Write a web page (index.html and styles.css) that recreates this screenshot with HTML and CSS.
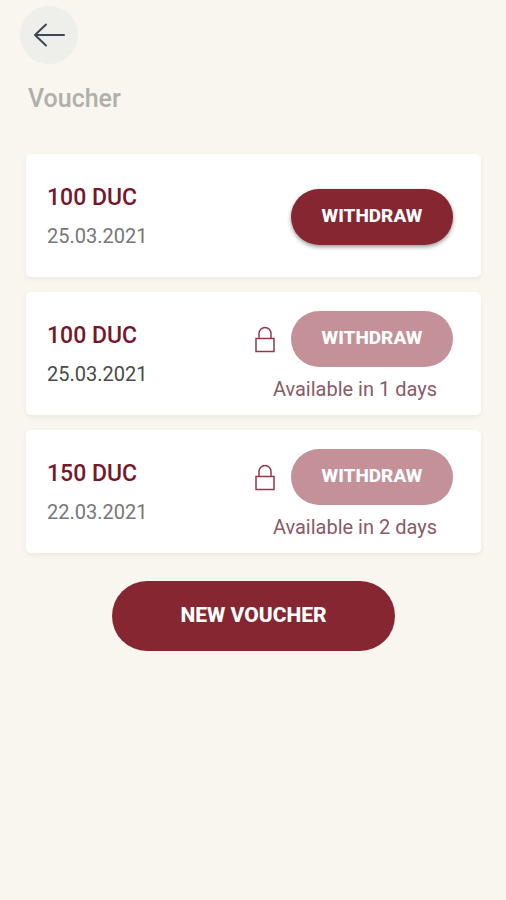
FILE: index.html
```html
<!DOCTYPE html>
<html lang="en">

<head>
    <meta charset="utf-8">
    <meta name="viewport" content="width=device-width, initial-scale=1">
    <title>Voucher</title>
    <link rel="stylesheet" href="styles.css">
</head>

<body>
    <header class="header">
        <button type="button" class="back" aria-label="Back">
            <svg width="32" height="24" viewBox="0 0 32 24">
                <path d="M31 12H2M13 1.5L2 12l11 10.5" />
            </svg>
        </button>
        <h1 class="title">Voucher</h1>
    </header>

    <main class="content">
        <ul class="list">
            <li class="card">
                <div class="info">
                    <h2 class="amount">100 DUC</h2>
                    <p class="date light">25.03.2021</p>
                </div>
                <div class="action">
                    <button type="button" class="btn withdraw">WITHDRAW</button>
                </div>
            </li>
            <li class="card">
                <div class="info">
                    <h2 class="amount">100 DUC</h2>
                    <p class="date">25.03.2021</p>
                </div>
                <div class="action">
                    <div class="locked">
                        <svg class="lock" width="20" height="28" viewBox="0 0 20 28">
                            <path d="M1 13.5h18v13H1zM4 13.5v-5a6 6 0 0 1 12 0v5" />
                        </svg>
                        <button type="button" class="btn withdraw" disabled>WITHDRAW</button>
                    </div>
                    <p class="note">Available in 1 days</p>
                </div>
            </li>
            <li class="card">
                <div class="info">
                    <h2 class="amount">150 DUC</h2>
                    <p class="date light">22.03.2021</p>
                </div>
                <div class="action">
                    <div class="locked">
                        <svg class="lock" width="20" height="28" viewBox="0 0 20 28">
                            <path d="M1 13.5h18v13H1zM4 13.5v-5a6 6 0 0 1 12 0v5" />
                        </svg>
                        <button type="button" class="btn withdraw" disabled>WITHDRAW</button>
                    </div>
                    <p class="note">Available in 2 days</p>
                </div>
            </li>
        </ul>

        <button type="button" class="btn new-voucher">NEW VOUCHER</button>
    </main>
</body>

</html>
```
FILE: styles.css
```css
* {
    box-sizing: border-box;
}

body {
    margin: 0;
    background: #f9f6f0;
    font-family: Roboto, sans-serif;
}

h1,
h2,
p,
ul {
    margin: 0;
    padding: 0;
}

.header {
    padding: 6px 20px 0;
}

.back {
    display: flex;
    align-items: center;
    justify-content: center;
    width: 58px;
    height: 58px;
    padding: 0;
    border: none;
    border-radius: 50%;
    background: #eeeeea;
    cursor: pointer;
}

.back svg {
    fill: none;
    stroke: #3c4856;
    stroke-width: 2;
    stroke-linecap: round;
    stroke-linejoin: round;
}

.title {
    margin: 20px 8px 0;
    color: #b0afab;
    font-size: 25px;
    font-weight: 500;
    line-height: 30px;
}

.content {
    display: flex;
    flex-direction: column;
    align-items: center;
    padding: 40px 25px 40px 26px;
}

.list {
    display: flex;
    flex-direction: column;
    gap: 15px;
    width: 100%;
    list-style: none;
}

.card {
    display: flex;
    align-items: center;
    justify-content: space-between;
    min-height: 123px;
    padding: 14px 28px 12px 21px;
    border-radius: 5px;
    background: #fff;
    box-shadow: 0 2px 4px rgba(90, 70, 40, 0.08);
}

.info {
    padding-bottom: 2px;
}

.amount {
    color: #75182a;
    font-size: 23px;
    font-weight: 500;
    line-height: 28px;
}

.date {
    margin-top: 12px;
    color: #4a4a4a;
    font-size: 20px;
    font-weight: 400;
    line-height: 24px;
}

.date.light {
    color: #777;
}

.action {
    display: flex;
    flex-direction: column;
    align-items: flex-end;
}

.locked {
    display: flex;
    align-items: center;
    gap: 16px;
    padding-top: 2px;
}

.lock {
    fill: none;
    stroke: #923a4b;
    stroke-width: 1.5;
}

.btn {
    border: none;
    border-radius: 36px;
    background: #862631;
    color: #fff;
    font-family: inherit;
    font-weight: 800;
    cursor: pointer;
}

.withdraw {
    width: 162px;
    height: 56px;
    padding: 0 0 2px;
    font-size: 19px;
    box-shadow: 0 2px 4px rgba(0, 0, 0, 0.4);
}

.withdraw:disabled {
    background: #c49199;
    box-shadow: none;
    cursor: default;
}

.note {
    margin: 10px 16px 0 0;
    color: #8a5a66;
    font-size: 20px;
    font-weight: 400;
    line-height: 24px;
}

.new-voucher {
    width: 62%;
    height: 70px;
    margin-top: 28px;
    padding: 0 0 2px;
    font-size: 21px;
}
```
